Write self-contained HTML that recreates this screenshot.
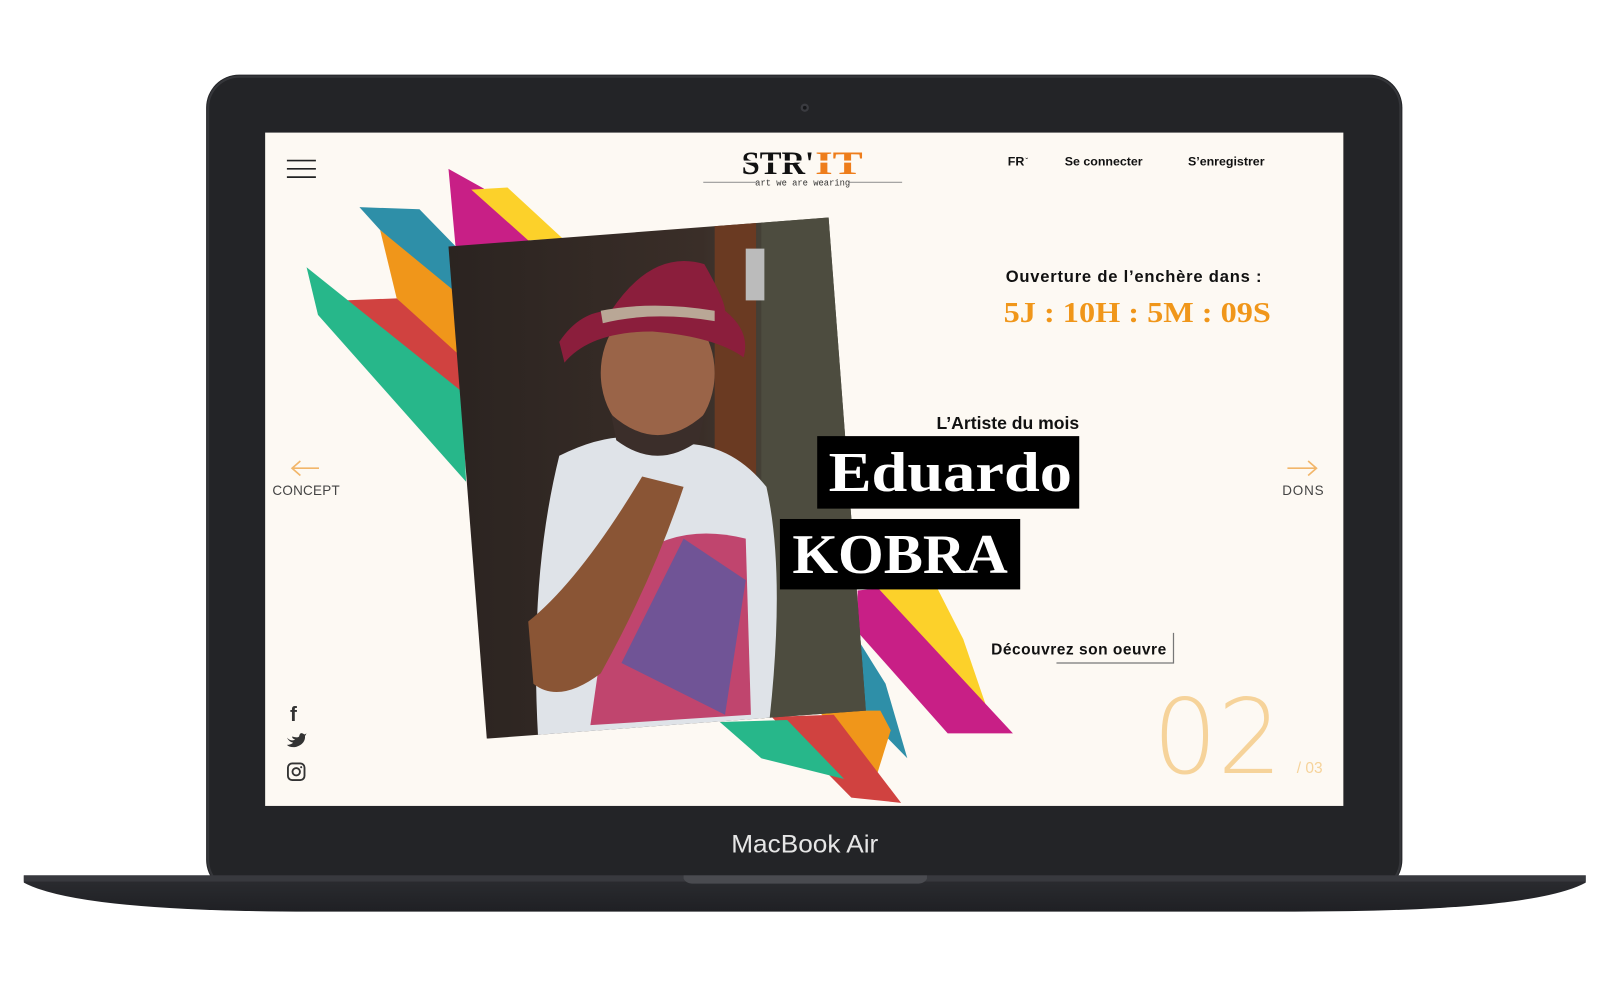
<!DOCTYPE html>
<html><head><meta charset="utf-8"><style>
html,body{margin:0;padding:0;background:#fff;overflow:hidden}
svg{display:block}
</style></head><body>
<svg width="1623" height="981" viewBox="0 0 1567 947" preserveAspectRatio="none" xmlns="http://www.w3.org/2000/svg">
<defs>
<linearGradient id="bg" x1="0" y1="0" x2="1" y2="0"><stop offset="0" stop-color="#2a2320"/><stop offset="0.6" stop-color="#3a2e28"/><stop offset="0.8" stop-color="#4a4a3e"/><stop offset="1" stop-color="#3b3b32"/></linearGradient>
<linearGradient id="base" x1="0" y1="0" x2="0" y2="1"><stop offset="0" stop-color="#2c2d31"/><stop offset="1" stop-color="#1f2024"/></linearGradient>
<clipPath id="pc"><polygon points="433,238 800,210 836,686 470,713"/></clipPath>
</defs>
<rect x="199" y="72" width="1155" height="790" rx="32" fill="#232427"/>
<rect x="201" y="74" width="1151" height="786" rx="30" fill="none" stroke="#35363a" stroke-width="2"/>
<circle cx="777" cy="104" r="4" fill="#3a3b40"/><circle cx="777" cy="104" r="1.8" fill="#16171a"/>
<text x="777" y="823" text-anchor="middle" font-family="Liberation Sans, sans-serif" font-size="24" fill="#e6e6e6" textLength="142" lengthAdjust="spacingAndGlyphs">MacBook Air</text>
<path d="M23,845 L1531,845 L1531,852 Q1480,880 1250,880 L300,880 Q75,880 23,852 Z" fill="url(#base)"/>
<rect x="23" y="845" width="1508" height="6" fill="#38393e"/>
<path d="M660,845 L895,845 L895,848 Q893,853 885,853 L670,853 Q662,853 660,848 Z" fill="#4a4b50"/>
<rect x="256" y="128" width="1041" height="650" fill="#fdf9f3"/>
<g stroke="#222" stroke-width="1.6"><line x1="277" y1="155" x2="305" y2="155"/><line x1="277" y1="163" x2="305" y2="163"/><line x1="277" y1="171" x2="305" y2="171"/></g>
<text x="716" y="168" font-family="Liberation Serif, serif" font-weight="900" font-size="32" fill="#111" textLength="70" lengthAdjust="spacingAndGlyphs">STR'</text>
<text x="787" y="168" font-family="Liberation Serif, serif" font-weight="900" font-size="32" fill="#ee7d1b" textLength="46" lengthAdjust="spacingAndGlyphs">IT</text>
<rect x="708" y="155" width="138" height="2" fill="#fdf9f3"/>
<line x1="679" y1="176" x2="730" y2="176" stroke="#999" stroke-width="1"/><line x1="820" y1="176" x2="871" y2="176" stroke="#999" stroke-width="1"/>
<text x="775" y="179" text-anchor="middle" font-family="Liberation Mono, monospace" font-size="8.5" fill="#333">art we are wearing</text>
<g font-family="Liberation Sans, sans-serif" font-weight="bold" font-size="12" fill="#111">
<text x="973" y="160">FR</text><text x="990" y="158" font-size="7">ˇ</text>
<text x="1028" y="160">Se connecter</text><text x="1147" y="160">S’enregistrer</text></g>
<text x="971" y="272" font-family="Liberation Sans, sans-serif" font-weight="bold" font-size="16" fill="#111" textLength="247">Ouverture de l’enchère dans :</text>
<text x="969" y="311" font-family="Liberation Serif, serif" font-weight="900" font-size="28" fill="#f0961a" textLength="258" lengthAdjust="spacingAndGlyphs">5J : 10H : 5M : 09S</text>
<polygon points="347,200 405,202 445,243 445,290 367,222" fill="#2e8fa8"/>
<polygon points="367,222 440,282 446,350 383,288" fill="#f0961a"/>
<polygon points="333,290 383,288 446,345 446,410" fill="#d04240"/>
<polygon points="296,258 446,378 450,465 307,304" fill="#27b78a"/>
<polygon points="433,163 467,182 515,236 440,240" fill="#c81f86"/>
<polygon points="455,183 490,181 543,230 510,232" fill="#fcd12a"/>
<polygon points="845,568 905,568 930,617 955,690 930,690" fill="#fcd12a"/>
<polygon points="828,570 848,568 978,708 915,708 828,610" fill="#c81f86"/>
<polygon points="830,620 855,660 876,732 835,690" fill="#2e8fa8"/>
<polygon points="790,686 850,686 860,705 846,750" fill="#f0961a"/>
<polygon points="745,692 805,690 870,775 822,770" fill="#d04240"/>
<polygon points="695,697 760,695 815,752 735,732" fill="#27b78a"/>
<g clip-path="url(#pc)">
<rect x="420" y="200" width="430" height="520" fill="url(#bg)"/>
<rect x="690" y="200" width="40" height="380" fill="#6a3a22"/>
<rect x="735" y="200" width="110" height="520" fill="#4d4c3f"/>
<rect x="720" y="240" width="18" height="50" fill="#bbb"/>
<path d="M520,720 Q510,560 540,440 Q600,410 640,430 Q700,420 740,470 Q760,560 740,720 Z" fill="#dfe3e8"/>
<path d="M570,700 L590,560 Q640,500 720,520 L725,690 Z" fill="#c0456e"/>
<path d="M600,640 L660,520 L720,560 L700,690 Z" fill="#3a5fb0" opacity="0.6"/>
<path d="M510,600 Q560,560 620,460 L660,470 Q630,560 580,650 Q540,680 515,660 Z" fill="#8a5535"/>
<ellipse cx="635" cy="360" rx="55" ry="68" fill="#9a6448"/>
<path d="M590,400 Q635,440 680,400 L675,425 Q635,455 595,425 Z" fill="#3b2e2a"/>
<path d="M540,330 Q560,300 590,300 Q630,240 680,255 Q700,290 700,300 Q725,320 718,345 Q690,325 630,320 Q570,320 545,350 Z" fill="#8b1e3c"/>
<path d="M580,300 Q630,290 690,300 L690,310 Q630,300 582,312 Z" fill="#b9a796"/>
</g>
<text x="1042" y="414" text-anchor="end" font-family="Liberation Sans, sans-serif" font-weight="bold" font-size="17" fill="#111">L’Artiste du mois</text>
<rect x="789" y="421" width="253" height="70" fill="#000"/>
<text x="800" y="474" font-family="Liberation Serif, serif" font-weight="900" font-size="54" fill="#fff" textLength="235" lengthAdjust="spacingAndGlyphs">Eduardo</text>
<rect x="753" y="501" width="232" height="68" fill="#000"/>
<text x="765" y="553" font-family="Liberation Serif, serif" font-weight="900" font-size="54" fill="#fff" textLength="208" lengthAdjust="spacingAndGlyphs">KOBRA</text>
<text x="957" y="632" font-family="Liberation Sans, sans-serif" font-weight="bold" font-size="15" fill="#111" textLength="169">Découvrez son oeuvre</text>
<polyline points="1020,640 1133,640 1133,611" fill="none" stroke="#777" stroke-width="1.2"/>
<text x="1113" y="746" font-family="DejaVu Sans, sans-serif" font-weight="200" font-size="100" fill="#f6d39a" textLength="125" lengthAdjust="spacingAndGlyphs">02</text>
<text x="1252" y="746" font-family="Liberation Sans, sans-serif" font-size="15" fill="#f6d39a">/ 03</text>
<g stroke="#f2b66a" stroke-width="1.6" fill="none"><path d="M308,452 L282,452 M290,445 L282,452 L290,459"/><path d="M1243,452 L1271,452 M1263,445 L1271,452 L1263,459"/></g>
<text x="263" y="478" font-family="Liberation Sans, sans-serif" font-size="13" fill="#444" textLength="65">CONCEPT</text>
<text x="1238" y="478" font-family="Liberation Sans, sans-serif" font-size="13" fill="#444" textLength="40">DONS</text>
<text x="280" y="696" font-family="Liberation Sans, sans-serif" font-weight="bold" font-size="20" fill="#333">f</text>
<path d="M277,712 Q281,716 285,714 Q282,713 282,711 Q289,713 289,710 Q290,706 294,709 L296,708 L294.5,710.5 Q295,718 286,721 Q280,722 277,719 Q281,719 283,717 Q279,716 277,712 Z" fill="#333"/>
<rect x="278" y="737" width="16" height="16" rx="4" fill="none" stroke="#333" stroke-width="1.8"/>
<circle cx="286" cy="745" r="3.6" fill="none" stroke="#333" stroke-width="1.8"/><circle cx="290.8" cy="740.6" r="1" fill="#333"/>
</svg>
</body></html>
